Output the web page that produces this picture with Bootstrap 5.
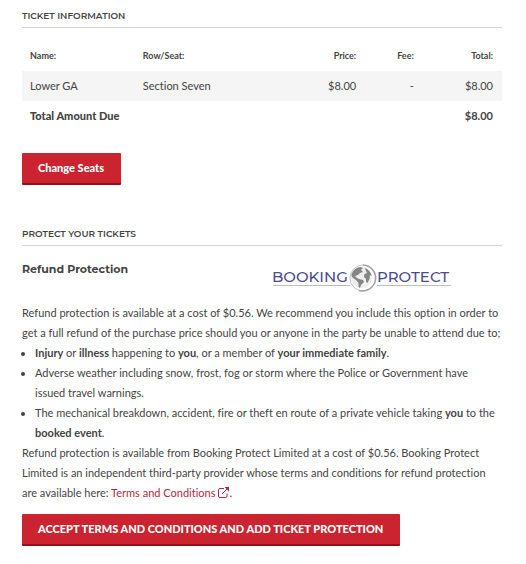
<!DOCTYPE html>
<html lang="en">
<head>
<meta charset="utf-8">
<meta name="viewport" content="width=device-width, initial-scale=1">
<title>Ticket Information</title>
<link href="https://cdn.jsdelivr.net/npm/bootstrap@5.3.0/dist/css/bootstrap.min.css" rel="stylesheet">
<style>
body{font:11px/20px Lato,"Open Sans",sans-serif;color:#444;font-variant-ligatures:none}
.page{padding:8px 24px 16px 22px}
.section-title{font:600 9px/16px Montserrat,Inter,sans-serif;padding-bottom:3px;margin-bottom:13px;border-bottom:1px solid #d3d3d3}
.order-table{--bs-table-bg:transparent;color:#444;table-layout:fixed;margin-bottom:22px}
.order-table th,.order-table td{padding:5px 9px 5px 8px}
.order-table thead th{font-size:9px}
.order-table tbody td{background:#f5f5f5}
.order-table tfoot th{font-weight:900}
.col-name{width:23.5%}
.col-seat{width:33.5%}
.col-price{width:14.5%}
.col-fee{width:12%}
.btn-ticket{--bs-btn-color:#fff;--bs-btn-bg:#cb2430;--bs-btn-hover-color:#fff;--bs-btn-hover-bg:#b51d28;--bs-btn-active-color:#fff;--bs-btn-active-bg:#a51822;font-size:11px;font-weight:900;line-height:20px;padding:5px 17px 5px 16px;border:0;border-bottom:2px solid #970f19;border-radius:1px}
.protect{margin-top:41px}
.protect-head{margin-bottom:10px}
.sub-title{font:700 11px/20px Montserrat,Inter,sans-serif}
.brand{width:180px;height:32px;margin:2px 50px 0 0}
.brand text{font:500 15px Montserrat,Inter,sans-serif;fill:#4b4c91}
.terms,.terms:hover{color:#b02a42}
.terms svg{width:11px;height:11px;margin-left:3px;vertical-align:-1px}
.notes{padding:0 6px 0 13px}
.policy{margin-bottom:11px}
</style>
</head>
<body class="bg-white">
<main class="page">
<h2 class="section-title">TICKET INFORMATION</h2>
<table class="table table-borderless order-table">
<colgroup><col class="col-name"><col class="col-seat"><col class="col-price"><col class="col-fee"><col></colgroup>
<thead><tr><th scope="col">Name:</th><th scope="col">Row/Seat:</th><th scope="col" class="text-end">Price:</th><th scope="col" class="text-end">Fee:</th><th scope="col" class="text-end">Total:</th></tr></thead>
<tbody><tr><td>Lower GA</td><td>Section Seven</td><td class="text-end">$8.00</td><td class="text-end">-</td><td class="text-end">$8.00</td></tr></tbody>
<tfoot><tr><th scope="row" colspan="4">Total Amount Due</th><td class="text-end fw-bold">$8.00</td></tr></tfoot>
</table>
<button type="button" class="btn btn-ticket d-block">Change Seats</button>
<section class="protect">
<h2 class="section-title">PROTECT YOUR TICKETS</h2>
<div class="protect-head d-flex justify-content-between align-items-start">
<h3 class="sub-title mb-0">Refund Protection</h3>
<svg class="brand" viewBox="0 0 180 32" role="img" aria-label="Booking Protect">
<path d="M1 24.500H78M105 24.500H179" stroke="#bdbdc2"/>
<text x="0" y="21">BOOKING</text>
<text x="105" y="21">PROTECT</text>
<circle cx="91" cy="17" r="13" fill="#fff" stroke="#c4c4c4"/>
<path d="M91 4A13 13 0 1 1 87 29.500" fill="none" stroke="#a3a3a3" stroke-width="1.500"/>
<circle cx="89.500" cy="16.500" r="10.500" fill="#eeeeef"/>
<path d="M79.500 13Q82 7 88 6L91 7 89 9 91 11 88 12 86 14 83 15 85 17 87 18 91 19 92 21 89 24 88 27 86.500 26V22L84 19 81 17 79.500 15ZM93 7Q98 9 100 15L98 14 97.500 18 95.500 22 94 21V18L92 16 92.500 13 95 12 94 10Z" fill="#858585"/>
</svg>
</div>
<p class="mb-0">Refund protection is available at a cost of $0.56. We recommend you include this option in order to get a full refund of the purchase price should you or anyone in the party be unable to attend due to;</p>
<ul class="notes mb-0">
<li><strong>Injury</strong> or <strong>illness</strong> happening to <strong>you</strong>, or a member of <strong>your immediate family</strong>.</li>
<li>Adverse weather including snow, frost, fog or storm where the Police or Government have issued travel warnings.</li>
<li>The mechanical breakdown, accident, fire or theft en route of a private vehicle taking <strong>you</strong> to the <strong>booked event</strong>.</li>
</ul>
<p class="policy">Refund protection is available from Booking Protect Limited at a cost of $0.56. Booking Protect Limited is an independent third-party provider whose terms and conditions for refund protection are available here: <a class="terms text-decoration-none" href="#terms">Terms and Conditions<svg viewBox="0 0 11 11" aria-hidden="true"><path d="M6 1.500H2Q.5 1.500 .5 3V9Q.5 10.500 2 10.500H7.500Q9 10.500 9 9V6.500M4 7L9 2" fill="none" stroke="currentColor"/><path d="M6.500 0H11V4.500Z" fill="currentColor"/></svg></a>.</p>
<button type="button" class="btn btn-ticket">ACCEPT TERMS AND CONDITIONS AND ADD TICKET PROTECTION</button>
</section>
</main>
<script src="https://cdn.jsdelivr.net/npm/bootstrap@5.3.0/dist/js/bootstrap.bundle.min.js"></script>
</body>
</html>
